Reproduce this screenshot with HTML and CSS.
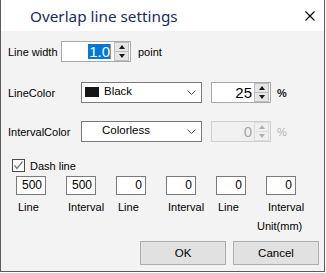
FILE: index.html
```html
<!DOCTYPE html>
<html>
<head>
<meta charset="utf-8">
<link rel="stylesheet" href="styles.css">
</head>
<body>
<div class="window">
  <div class="titlebar">
    <span class="title">Overlap line settings</span>
    <svg class="close" width="10" height="10" viewBox="0 0 10 10"><path d="M0.5 0.5 L9.5 9.5 M9.5 0.5 L0.5 9.5" stroke="#000" stroke-width="1.1" fill="none"/></svg>
  </div>
  <div class="content">
    <div class="row row-width">
      <span class="lbl lbl-w53">Line width</span>
      <div class="spin spin-width">
        <div class="spin-field"><span class="sel">1.0</span><span class="caret"></span></div>
        <div class="spin-btns"><span class="sbtn"><i class="tri-up"></i></span><span class="sbtn"><i class="tri-down"></i></span></div>
      </div>
      <span class="unit-point">point</span>
    </div>

    <div class="row row-color">
      <span class="lbl lbl-w73">LineColor</span>
      <div class="combo">
        <span class="swatch swatch-black"></span>
        <span class="combo-text">Black</span>
        <svg class="chev" width="9" height="5" viewBox="0 0 9 5"><polyline points="0.5,0.5 4.5,4.5 8.5,0.5" fill="none" stroke="#505050" stroke-width="1"/></svg>
      </div>
      <div class="spin spin-pct">
        <div class="spin-field">25</div>
        <div class="spin-btns"><span class="sbtn"><i class="tri-up"></i></span><span class="sbtn"><i class="tri-down"></i></span></div>
      </div>
      <span class="pct">%</span>
    </div>

    <div class="row row-interval">
      <span class="lbl lbl-w73">IntervalColor</span>
      <div class="combo">
        <span class="swatch swatch-none"></span>
        <span class="combo-text combo-text-none">Colorless</span>
        <svg class="chev" width="9" height="5" viewBox="0 0 9 5"><polyline points="0.5,0.5 4.5,4.5 8.5,0.5" fill="none" stroke="#505050" stroke-width="1"/></svg>
      </div>
      <div class="spin spin-pct disabled">
        <div class="spin-field">0</div>
        <div class="spin-btns"><span class="sbtn"><i class="tri-up"></i></span><span class="sbtn"><i class="tri-down"></i></span></div>
      </div>
      <span class="pct pct-disabled">%</span>
    </div>

    <div class="check-row">
      <span class="checkbox"><svg width="11" height="11" viewBox="0 0 11 11"><polyline points="1.5,5.5 4,8.5 9.5,1.5" fill="none" stroke="#7a7a7a" stroke-width="1.3"/></svg></span>
      <span class="check-label">Dash line</span>
    </div>

    <div class="dash-grid">
      <div class="dash-box">500</div>
      <div class="dash-box">500</div>
      <div class="dash-box">0</div>
      <div class="dash-box">0</div>
      <div class="dash-box">0</div>
      <div class="dash-box">0</div>
      <div class="dash-lbl">Line</div>
      <div class="dash-lbl">Interval</div>
      <div class="dash-lbl">Line</div>
      <div class="dash-lbl">Interval</div>
      <div class="dash-lbl">Line</div>
      <div class="dash-lbl">Interval</div>
    </div>

    <div class="unit-mm">Unit(mm)</div>

    <div class="buttons">
      <button class="btn">OK</button>
      <button class="btn">Cancel</button>
    </div>
  </div>
</div>
</body>
</html>
```

FILE: styles.css
```css
html, body {
  margin: 0;
  padding: 0;
  background: #ffffff;
}

.window {
  box-sizing: border-box;
  width: 325px;
  height: 272px;
  border-left: 1px solid #5c5c5c;
  border-right: 1px solid #5c5c5c;
  border-bottom: 1px solid #5c5c5c;
  background: #f3f3f3;
  font-family: "Liberation Sans", Arial, sans-serif;
  font-size: 11px;
  color: #000;
}

.titlebar {
  height: 31px;
  background: #ffffff;
  display: flex;
  align-items: center;
}

.title {
  padding-left: 29px;
  font-family: "Noto Sans", "Open Sans", sans-serif;
  font-size: 15.3px;
  color: #1a2c60;
  line-height: 20px;
  margin-top: 1px;
}

.close {
  margin-left: auto;
  margin-right: 9px;
  display: block;
}

.content {
  padding: 10px 5px 0 7px;
}

.row {
  display: flex;
  align-items: center;
  height: 21px;
}

.row-color {
  margin-top: 20px;
}

.row-interval {
  margin-top: 18px;
}

.lbl {
  flex: none;
  line-height: 14px;
}

.lbl-w53 {
  width: 53px;
}

.lbl-w73 {
  width: 73px;
}

/* spin boxes */
.spin {
  box-sizing: border-box;
  height: 21px;
  border: 1px solid #a9a9a9;
  background: #fff;
  display: flex;
  flex: none;
}

.spin-width {
  width: 70px;
}

.spin-pct {
  width: 60px;
  margin-left: 9px;
}

.spin-field {
  flex: 1;
  display: flex;
  justify-content: flex-end;
  align-items: center;
  font-size: 15px;
  line-height: 15px;
  padding-right: 2px;
  color: #000;
}

.sel {
  background: #0078d7;
  color: #fff;
  height: 15px;
  line-height: 15px;
  padding: 0 0 0 1px;
}

.caret {
  width: 1px;
  height: 15px;
  background: #f08020;
  margin-right: 1px;
}

.spin-btns {
  width: 15px;
  display: flex;
  flex-direction: column;
  margin: 0 1px 0 0;
}

.sbtn {
  box-sizing: border-box;
  flex: 1;
  background: #e6e6e6;
  border: 1px solid #bcbcbc;
  display: flex;
  align-items: center;
  justify-content: center;
}

.sbtn + .sbtn {
  border-top: none;
}

.tri-up {
  width: 0;
  height: 0;
  border-left: 3.5px solid transparent;
  border-right: 3.5px solid transparent;
  border-bottom: 4px solid #1a1a1a;
}

.tri-down {
  width: 0;
  height: 0;
  border-left: 3.5px solid transparent;
  border-right: 3.5px solid transparent;
  border-top: 4px solid #1a1a1a;
}

.disabled {
  background: #f0f0f0;
  border-color: #cfcfcf;
}

.disabled .spin-field {
  color: #a4a4a4;
}

.disabled .sbtn {
  background: #f0f0f0;
  border-color: #dcdcdc;
}

.disabled .tri-up {
  border-bottom-color: #b0b0b0;
}

.disabled .tri-down {
  border-top-color: #b0b0b0;
}

.unit-point {
  margin-left: 7px;
}

.pct {
  margin-left: 6px;
  font-weight: bold;
  color: #222;
}

.pct-disabled {
  color: #b4b4b4;
  font-weight: normal;
}

/* combo */
.combo {
  box-sizing: border-box;
  width: 121px;
  height: 21px;
  flex: none;
  border: 1px solid #7a7a7a;
  background: #fff;
  display: flex;
  align-items: center;
  padding-left: 3px;
}

.swatch {
  width: 14px;
  height: 10px;
  flex: none;
  margin-top: -1px;
}

.swatch-black {
  background: #161616;
}

.swatch-none {
  background: #ffffff;
}

.combo-text {
  margin-left: 5px;
  font-size: 11.5px;
  line-height: 14px;
  margin-top: -3px;
}

.combo-text-none {
  margin-left: 3px;
}

.chev {
  margin-left: auto;
  margin-right: 5px;
  display: block;
}

/* checkbox */
.check-row {
  margin-top: 17px;
  height: 13px;
  display: flex;
  align-items: center;
  padding-left: 4px;
}

.checkbox {
  box-sizing: border-box;
  width: 13px;
  height: 13px;
  border: 1px solid #4a4a4a;
  background: #fff;
  display: flex;
  align-items: center;
  justify-content: center;
}

.checkbox svg {
  display: block;
}

.check-label {
  margin-left: 5px;
  line-height: 14px;
}

/* dash grid */
.dash-grid {
  margin-top: 4px;
  margin-left: 8px;
  display: grid;
  grid-template-columns: repeat(6, 50px);
  row-gap: 5px;
}

.dash-box {
  box-sizing: border-box;
  width: 30px;
  height: 19px;
  border: 1px solid #7a7a7a;
  background: #fff;
  text-align: right;
  padding-right: 3px;
  font-size: 12px;
  line-height: 17px;
}

.dash-lbl {
  padding-left: 2px;
  line-height: 14px;
}

.unit-mm {
  margin-top: 5px;
  margin-left: 249px;
  line-height: 14px;
}

.buttons {
  margin-top: 8px;
  display: flex;
  justify-content: flex-end;
  gap: 7px;
}

.btn {
  box-sizing: border-box;
  width: 86px;
  height: 24px;
  background: #e1e1e1;
  border: 1px solid #adadad;
  font-family: "Liberation Sans", Arial, sans-serif;
  font-size: 11.5px;
  color: #000;
  padding: 0;
  margin: 0;
}
```
